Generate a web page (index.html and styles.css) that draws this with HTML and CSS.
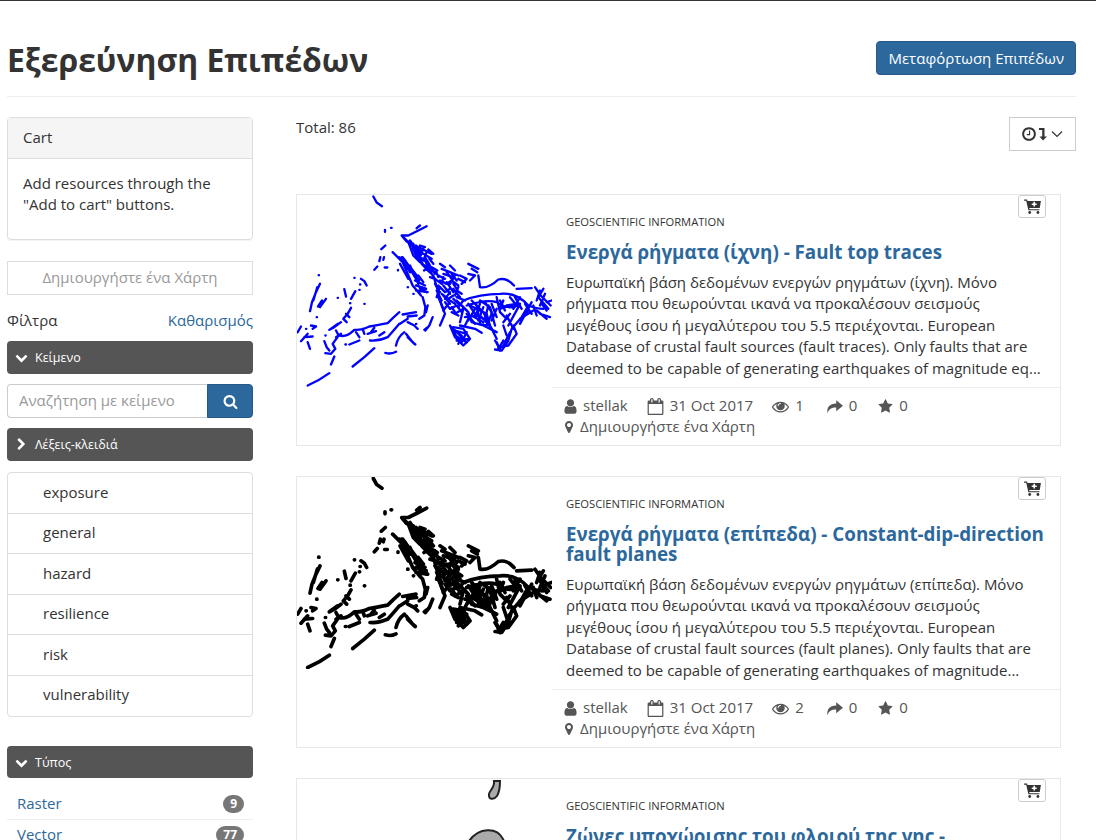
FILE: index.html
```html
<!DOCTYPE html>
<html lang="el">
<head>
  <meta charset="UTF-8" />
  <title>Εξερεύνηση Επιπέδων</title>
  <link rel="stylesheet" href="styles.css">
</head>
<body>
  <svg class="sprite" xmlns="http://www.w3.org/2000/svg">
    <symbol id="i-star" viewBox="0 0 1792 1792"><path d="M1728 647q0 22-26 48l-363 354 86 500q1 7 1 20 0 21-10.500 35.500t-30.500 14.500q-19 0-40-12l-449-236-449 236q-22 12-40 12-21 0-31.500-14.500t-10.500-35.500q0-6 2-20l86-500-364-354q-25-27-25-48 0-37 56-46l502-73 225-455q19-41 49-41t49 41l225 455 502 73q56 9 56 46z"/></symbol>
    <symbol id="i-search" viewBox="0 0 1792 1792"><path d="M1216 832q0-185-131.500-316.500t-316.500-131.500-316.500 131.500-131.500 316.500 131.500 316.500 316.500 131.500 316.500-131.500 131.500-316.500zm512 832q0 52-38 90t-90 38q-54 0-90-38l-343-342q-179 124-399 124-143 0-273.500-55.500t-225-150-150-225-55.500-273.500 55.500-273.500 150-225 225-150 273.500-55.500 273.500 55.500 225 150 150 225 55.500 273.500q0 220-124 399l343 343q37 37 37 90z"/></symbol>
    <symbol id="i-down" viewBox="0 0 1792 1792"><path d="M1683 808l-742 741q-19 19-45 19t-45-19l-742-741q-19-19-19-45.500t19-45.500l166-165q19-19 45-19t45 19l531 531 531-531q19-19 45-19t45 19l166 165q19 19 19 45.500t-19 45.500z"/></symbol>
    <symbol id="i-right" viewBox="0 0 1792 1792"><path d="M1363 877l-742 742q-19 19-45 19t-45-19l-166-166q-19-19-19-45t19-45l531-531-531-531q-19-19-19-45t19-45l166-166q19-19 45-19t45 19l742 742q19 19 19 45t-19 45z"/></symbol>
    <symbol id="i-user" viewBox="0 0 1792 1792"><path d="M1536 1399q0 109-62.500 187t-150.500 78h-854q-88 0-150.500-78t-62.500-187q0-85 8.500-160.500t31.500-152 58.500-131 94-89 134.500-34.500q131 128 313 128t313-128q76 0 134.500 34.500t94 89 58.500 131 31.500 152 8.500 160.500zm-256-887q0 159-112.500 271.500t-271.500 112.500-271.500-112.500-112.500-271.500 112.500-271.500 271.500-112.500 271.500 112.500 112.500 271.500z"/></symbol>
    <symbol id="i-marker" viewBox="0 0 1792 1792"><path d="M1152 640q0-106-75-181t-181-75-181 75-75 181 75 181 181 75 181-75 75-181zm256 0q0 109-33 179l-364 774q-16 33-47.500 52t-67.500 19-67.500-19-46.500-52l-365-774q-33-70-33-179 0-212 150-362t362-150 362 150 150 362z"/></symbol>
    <symbol id="i-share" viewBox="0 0 20 20"><path d="M12 2.500 20 9l-8 6.500V11.300C7 11.200 3.300 12.800 1.800 18 .6 11.500 4 6.900 12 6.600z"/></symbol>
    <symbol id="i-eye" viewBox="0 0 1792 1792"><path d="M1664 960q-152-236-381-353 61 104 61 225 0 185-131.500 316.500t-316.500 131.500-316.500-131.500-131.500-316.500q0-121 61-225-229 117-381 353 133 205 333.500 326.500t434.500 121.500 434.500-121.500 333.500-326.500zm-720-384q0-20-14-34t-34-14q-125 0-214.500 89.500t-89.500 214.500q0 20 14 34t34 14 34-14 14-34q0-86 61-147t147-61q20 0 34-14t14-34zm848 384q0 34-20 69-140 230-376.500 368.500t-499.500 138.500-499.500-139-376.500-368q-20-35-20-69t20-69q140-229 376.500-368t499.500-139 499.500 139 376.500 368q20 35 20 69z"/></symbol>
    <symbol id="i-calendar" viewBox="0 0 1792 1792"><path d="M192 1664h1408v-1024h-1408v1024zm384-1216v-288q0-14-9-23t-23-9h-64q-14 0-23 9t-9 23v288q0 14 9 23t23 9h64q14 0 23-9t9-23zm768 0v-288q0-14-9-23t-23-9h-64q-14 0-23 9t-9 23v288q0 14 9 23t23 9h64q14 0 23-9t9-23zm384-64v1280q0 52-38 90t-90 38h-1408q-52 0-90-38t-38-90v-1280q0-52 38-90t90-38h128v-96q0-66 47-113t113-47h64q66 0 113 47t47 113v96h384v-96q0-66 47-113t113-47h64q66 0 113 47t47 113v96h128q52 0 90 38t38 90z"/></symbol>
    <symbol id="i-clock" viewBox="0 0 1536 1792"><path d="M896 544v448q0 14-9 23t-23 9h-320q-14 0-23-9t-9-23v-64q0-14 9-23t23-9h224v-352q0-14 9-23t23-9h64q14 0 23 9t9 23zm416 352q0-148-73-273t-198-198-273-73-273 73-198 198-73 273 73 273 198 198 273 73 273-73 198-198 73-273zm224 0q0 209-103 385.500t-279.500 279.500-385.500 103-385.500-103-279.500-279.500-103-385.500 103-385.500 279.500-279.500 385.500-103 385.500 103 279.500 279.500 103 385.500z"/></symbol>
    <symbol id="i-sort" viewBox="0 0 10 14"><path d="M1 1h5.500v8.500H9L5 13.500 1.500 9.500h2.700V3H1z"/></symbol>
    <symbol id="i-cart" viewBox="0 0 18 16"><path d="M0 .5h3.200l.5 1.600H18l-1.300 7.400H5.500l.3 1.300h10.600v1.300H4.600L2.300 1.800H0z"/><circle cx="6" cy="14.400" r="1.500"/><circle cx="14.800" cy="14.400" r="1.500"/><path fill="#fff" d="M10 3h1.700v1.800h1.800v1.500h-1.800v1.800H10V6.300H8.200V4.800H10z"/></symbol>
    <symbol id="faults" viewBox="3 15 765 573">
      <g fill="none" stroke="currentColor" stroke-linecap="round" stroke-linejoin="round">
        <!-- west side and the small dots above it -->
        <path d="M232 18 242 36 258 47M267 118v6M285 112h2M268 165 256 176M253 200 250 212M264 200 262 208M244 228 235 238M266 231H274M306 238v2
        M68 254h1M72 280 60 305 48 335 42 362M64 290 52 330M90 325 72 350M78 330 66 348M175 262h1M195 265 205 272 212 285M192 282h1M190 298h1M145 296 150 318M178 302 165 325M125 322h1M205 340h1M162 338h1M165 352 155 370 142 385 152 395M150 370 160 380M62 380h1M15 408 5 425M30 415h1M45 405 60 408 50 415M35 430 15 452M25 440 50 438M35 455 42 475M135 395 115 410 100 418M88 435h1M120 420 128 435 110 460 118 475 105 490 88 488M85 452 92 470 100 480M100 418 125 400M120 440 135 430M180 425 190 440M200 415 205 430M225 425 235 412M312 400 335 385
        M130 435Q150 442 175 418 195 420 220 408 240 405 275 398 295 378 310 365M115 498 105 522M235 473 205 500 170 528M100 548Q70 570 35 585M148 462h2M160 462 190 450M222 450Q250 452 275 440 295 418 310 400M215 430 240 422M250 435 265 425M320 372 360 365M335 378 362 375M300 465Q305 440 325 425M330 430 350 455 358 462M335 440 355 460M335 395 355 405 365 415M360 400h1M268 487Q285 492 300 484
        M380 320 388 350 385 375 370 385M395 345 390 365M410 380 400 405 388 420M385 418 392 412M352 310h1M335 290h1M290 185 320 215 335 250 350 285 375 315M300 195 345 240M320 200 370 270M310 200 335 235M360 285 390 295M360 300 395 305"/>
        <!-- dense eastern part -->
        <path transform="translate(312 105)" d="M80 2 55 15 25 30 5 30 20 48 45 62 58 100 78 130 100 150 112 190 125 240 135 265 120 300M60 0 50 8M25 50 40 90 60 110M30 55 55 65 75 75 95 85M40 65 50 95 70 120 85 125M45 70 60 80 55 100 75 105 90 135 105 140M40 70 50 85 58 80M65 115 80 130 72 135M95 145 105 160 90 155M60 60 75 65M85 72 100 85M70 85 95 100
        M120 115 135 125M125 130 150 140 175 150M130 145 160 155M150 120 165 135M205 115 235 130M215 130 232 140M205 145 225 150 210 165M180 150 200 160 185 175M120 165 140 175 155 165 175 180M115 180 135 200 150 190M125 205 145 220 160 210M110 195 125 225M150 225 165 235M170 195 185 205M160 175 170 190M135 230 150 250 170 240 185 260M155 260 175 270
        M235 150 240 185Q265 190 295 162 320 155 342 180M350 190 395 188M405 185 422 210 452 240M420 195 410 225M435 205 420 240M440 230 455 225M190 225Q240 205 300 205 350 200 385 240 410 250 430 250M200 240Q260 220 290 230 330 258 360 235M170 225 205 260 215 290 250 300 290 320M210 240 260 265 270 300M240 225 270 245 285 300M195 275 230 270 260 285M230 240 240 290M290 215 300 260 320 280M320 240 350 235M300 250 330 240M385 240 365 275 335 310 325 345 305 375 285 372M340 300 350 325 325 360 295 365M360 280 400 255M395 230 360 295M410 255 440 280M420 265 450 275M285 345 300 370M250 260 290 340
        M150 300 165 335 190 360 210 340 190 310 160 305M165 315 200 325M170 345 205 340M180 300 225 310 245 322M190 250 180 290M205 280 195 300"/>
        <path transform="translate(312 105)" d="M10 35 30 55M18 45 40 55M30 45 50 75M35 58 48 90M48 60 68 85M55 72 62 100M70 68 62 90M80 80 70 105M60 95 85 110M75 95 90 120M88 100 100 115M70 118 95 130M85 115 105 145M95 125 112 135M105 130 115 155M5 95 30 140M15 105 45 155M0 115 25 160M30 120 55 175M35 130 50 150M55 150 70 170M45 165 75 180M50 180 78 190M60 190 80 200
        M105 160 125 175M115 150 135 160M130 155 125 175M140 140 155 160M155 145 170 165M165 150 150 175M175 160 195 170M105 175 120 200M120 185 110 215M130 180 150 205M140 170 160 200M150 200 135 220M160 190 180 215M175 185 165 210M115 215 130 250M130 210 150 235M145 235 130 255M160 220 180 240M170 215 195 225M155 245 165 260M175 245 190 225M185 240 200 255M165 265 190 250
        M205 235 225 265M215 225 245 255M225 250 205 285M240 235 225 275M250 245 235 285M255 230 275 260M265 240 255 280M275 235 290 275M200 265 225 295M215 270 250 290M240 270 265 295M255 285 275 310M235 295 260 300M275 265 260 300M290 250 275 285M300 225 315 255M310 225 300 250M330 215 350 240M345 215 365 250M360 215 340 250M375 235 395 265M385 255 365 280M400 240 410 270M425 235 440 255M415 215 445 250M430 190 415 215M330 265 310 290M355 245 325 300M320 270 340 310M310 300 320 330
        M160 315 175 345M175 320 195 345M165 330 200 350M185 330 175 355M200 320 185 350M155 305 180 330M290 350 300 375M310 345 295 370M330 320 310 360"/>
      </g>
    </symbol>
  </svg>

  <div class="page">
    <header class="page-head">
      <h1>Εξερεύνηση Επιπέδων</h1>
      <a class="btn-primary" href="#">Μεταφόρτωση Επιπέδων</a>
    </header>

    <div class="columns">
      <aside class="sidebar">
        <section class="cart">
          <div class="cart-head">Cart</div>
          <div class="cart-body">Add resources through the "Add to cart" buttons.</div>
        </section>

        <a class="btn-map" href="#">Δημιουργήστε ένα Χάρτη</a>

        <div class="filter-row">
          <span>Φίλτρα</span>
          <a href="#">Καθαρισμός</a>
        </div>

        <div class="bar"><svg class="bar-icon"><use href="#i-down"/></svg>Κείμενο</div>
        <form class="search">
          <input type="text" placeholder="Αναζήτηση με κείμενο" />
          <button type="button"><svg><use href="#i-search"/></svg></button>
        </form>

        <div class="bar"><svg class="bar-icon"><use href="#i-right"/></svg>Λέξεις-κλειδιά</div>
        <ul class="keywords">
          <li>exposure</li>
          <li>general</li>
          <li>hazard</li>
          <li>resilience</li>
          <li>risk</li>
          <li>vulnerability</li>
        </ul>

        <div class="bar bar-type"><svg class="bar-icon"><use href="#i-down"/></svg>Τύπος</div>
        <ul class="types">
          <li><a href="#">Raster</a><span class="badge">9</span></li>
          <li><a href="#">Vector</a><span class="badge">77</span></li>
        </ul>
      </aside>

      <main class="results">
        <div class="results-top">
          <span class="total">Total: 86</span>
          <button class="sort" type="button">
            <svg class="sort-clock"><use href="#i-clock"/></svg>
            <svg class="sort-arrow"><use href="#i-sort"/></svg>
            <svg class="sort-caret" viewBox="0 0 12 8"><path d="M1 1.500 6 6.500 11 1.500"/></svg>
          </button>
        </div>

        <article class="card">
          <svg class="thumb thumb-blue"><use href="#faults"/></svg>
          <div class="card-text">
            <button class="add-cart" type="button"><svg><use href="#i-cart"/></svg></button>
            <div class="category">Geoscientific Information</div>
            <h2><a href="#">Ενεργά ρήγματα (ίχνη) - Fault top traces</a></h2>
            <p>Ευρωπαϊκή βάση δεδομένων ενεργών ρηγμάτων (ίχνη). Μόνο ρήγματα που θεωρούνται ικανά να προκαλέσουν σεισμούς μεγέθους ίσου ή μεγαλύτερου του 5.5 περιέχονται. European Database of crustal fault sources (fault traces). Only faults that are deemed to be capable of generating earthquakes of magnitude eq...</p>
            <div class="meta">
              <div class="meta-line">
                <span class="m-user"><svg><use href="#i-user"/></svg>stellak</span>
                <span class="m-date"><svg><use href="#i-calendar"/></svg>31 Oct 2017</span>
                <span class="m-views"><svg><use href="#i-eye"/></svg>1</span>
                <span class="m-share"><svg><use href="#i-share"/></svg>0</span>
                <span class="m-star"><svg><use href="#i-star"/></svg>0</span>
              </div>
              <div class="meta-line"><span class="m-map"><svg><use href="#i-marker"/></svg>Δημιουργήστε ένα Χάρτη</span></div>
            </div>
          </div>
        </article>

        <article class="card">
          <svg class="thumb thumb-black"><use href="#faults"/></svg>
          <div class="card-text">
            <button class="add-cart" type="button"><svg><use href="#i-cart"/></svg></button>
            <div class="category">Geoscientific Information</div>
            <h2><a href="#">Ενεργά ρήγματα (επίπεδα) - Constant-dip-direction fault planes</a></h2>
            <p>Ευρωπαϊκή βάση δεδομένων ενεργών ρηγμάτων (επίπεδα). Μόνο ρήγματα που θεωρούνται ικανά να προκαλέσουν σεισμούς μεγέθους ίσου ή μεγαλύτερου του 5.5 περιέχονται. European Database of crustal fault sources (fault planes). Only faults that are deemed to be capable of generating earthquakes of magnitude...</p>
            <div class="meta">
              <div class="meta-line">
                <span class="m-user"><svg><use href="#i-user"/></svg>stellak</span>
                <span class="m-date"><svg><use href="#i-calendar"/></svg>31 Oct 2017</span>
                <span class="m-views"><svg><use href="#i-eye"/></svg>2</span>
                <span class="m-share"><svg><use href="#i-share"/></svg>0</span>
                <span class="m-star"><svg><use href="#i-star"/></svg>0</span>
              </div>
              <div class="meta-line"><span class="m-map"><svg><use href="#i-marker"/></svg>Δημιουργήστε ένα Χάρτη</span></div>
            </div>
          </div>
        </article>

        <article class="card">
          <svg class="thumb thumb-zones" viewBox="0 0 255 192">
            <path d="M197 2C198 8 193 11 192 15 191 21 197 21 200 17 203 12 203 6 203 2Z"/>
            <path d="M172 62C182 48 200 48 206 60 212 70 212 90 198 120 182 125 166 95 172 62Z"/>
          </svg>
          <div class="card-text">
            <button class="add-cart" type="button"><svg><use href="#i-cart"/></svg></button>
            <div class="category">Geoscientific Information</div>
            <h2><a href="#">Ζώνες υποχώρισης του φλοιού της γης - Crustal&nbsp;subduction&nbsp;zones</a></h2>
          </div>
        </article>
      </main>
    </div>
  </div>
</body>
</html>
```
FILE: styles.css
```css
* {
  box-sizing: border-box;
}
body {
  margin: 0;
  border-top: 1px solid #333;
  font-family: "Open Sans", sans-serif;
  font-size: 15px;
  line-height: 1.42857;
  color: #333;
  background: #fff;
}
a {
  color: #2c689c;
  text-decoration: none;
}
.sprite {
  position: absolute;
  width: 0;
  height: 0;
}
.page {
  padding: 0 20px 0 7px;
}
.page-head {
  display: flex;
  justify-content: space-between;
  align-items: center;
  height: 96px;
  padding-top: 23px;
  border-bottom: 1px solid #eee;
}
.page-head h1 {
  margin: 0;
  font-size: 31.900px;
  font-weight: 700;
  line-height: 1.1;
  color: #333;
}
.btn-primary {
  display: block;
  height: 34px;
  margin-bottom: 4px;
  padding: 6px 11px;
  line-height: 20px;
  color: #fff;
  background: #2c689c;
  border: 1px solid #255a88;
  border-radius: 4px;
}
.columns {
  display: grid;
  grid-template-columns: 246px 765px;
  column-gap: 43px;
  padding-top: 20px;
}

/* sidebar */
.cart {
  border: 1px solid #ddd;
  border-radius: 4px;
  box-shadow: 0 1px 1px rgba(0, 0, 0, .05);
  height: 123px;
}
.cart-head {
  height: 41px;
  padding: 9px 15px;
  background: #f5f5f5;
  border-bottom: 1px solid #ddd;
}
.cart-body {
  padding: 14px 15px;
}
.btn-map {
  display: block;
  margin-top: 21px;
  height: 34px;
  line-height: 31px;
  text-align: center;
  color: #999;
  border: 1px solid #ddd;
}
.filter-row {
  display: flex;
  justify-content: space-between;
  margin-top: 15px;
  padding-bottom: 1px;
  height: 31px;
}
.bar {
  display: flex;
  align-items: center;
  height: 33px;
  padding-left: 8px;
  font-size: 12.500px;
  color: #fff;
  background: #555;
  border-radius: 4px;
}
.bar-icon {
  width: 13px;
  height: 13px;
  margin-right: 7px;
  fill: #fff;
}
.search {
  display: flex;
  height: 34px;
  margin: 10px 0;
}
.search input {
  flex: 1;
  min-width: 0;
  padding: 6px 11px;
  font: inherit;
  border: 1px solid #ccc;
  border-right: 0;
  border-radius: 4px 0 0 4px;
}
.search input::placeholder {
  color: #999;
}
.search button {
  width: 46px;
  padding: 0;
  background: #2c689c;
  border: 1px solid #255a88;
  border-radius: 0 4px 4px 0;
}
.search svg {
  display: block;
  width: 15px;
  height: 15px;
  margin: auto;
  fill: #fff;
}
.keywords {
  margin: 11px 0 0;
  padding: 0;
  list-style: none;
  border: 1px solid #ddd;
  border-radius: 4px;
}
.keywords li {
  height: 40.500px;
  padding: 8.500px 35px;
  border-bottom: 1px solid #ddd;
}
.keywords li:last-child {
  border-bottom: 0;
}
.bar-type {
  margin-top: 29px;
  height: 32px;
  padding-top: 1px;
}
.types {
  margin: 11px 0 0;
  padding: 0;
  list-style: none;
}
.types li {
  display: flex;
  justify-content: space-between;
  align-items: center;
  height: 31px;
  padding: 0 9px 0 10px;
  border-bottom: 1px solid #eee;
}
.badge {
  min-width: 10px;
  padding: 3px 7px;
  font-size: 12px;
  font-weight: 700;
  line-height: 1;
  color: #fff;
  background: #777;
  border-radius: 10px;
}

/* results */
.results {
  min-width: 0;
}
.results-top {
  display: flex;
  justify-content: space-between;
  align-items: flex-start;
  width: 780px;
  height: 77px;
}
.sort {
  display: flex;
  align-items: center;
  justify-content: center;
  width: 67px;
  height: 34px;
  padding: 0;
  background: #fff;
  border: 1px solid #ccc;
}
.sort-clock {
  width: 14px;
  height: 16px;
  margin-right: 1px;
  fill: #333;
}
.sort-arrow {
  width: 10px;
  height: 14px;
  margin: 0 3px 0 1px;
  fill: #333;
}
.sort-caret {
  width: 12px;
  height: 8px;
  fill: none;
  stroke: #333;
  stroke-width: 1.200;
}
.card {
  display: flex;
  height: 252px;
  margin-bottom: 30px;
  background: #fff;
  border: 1px solid #e7e7e7;
}
.card + .card {
  height: 272px;
}
.thumb {
  flex: none;
  width: 255px;
  height: 192px;
  filter: blur(.35px);
}
.thumb-blue {
  color: #0000ff;
  stroke-width: 7;
}
.thumb-black {
  color: #000;
  stroke-width: 11;
}
.thumb-zones path {
  fill: #aaa;
  stroke: #222;
  stroke-width: 2;
}
.card-text {
  position: relative;
  flex: 1;
  min-width: 0;
  padding-top: 19px;
}
.add-cart {
  position: absolute;
  top: 0;
  right: 14px;
  width: 28px;
  height: 23px;
  padding: 0;
  background: #fff;
  border: 1px solid #ccc;
  border-radius: 3px;
}
.add-cart svg {
  display: block;
  width: 17px;
  height: 15px;
  margin: auto;
  fill: #333;
}
.category {
  padding-left: 14px;
  font-size: 11.200px;
  line-height: 16px;
  text-transform: uppercase;
}
.card-text h2 {
  margin: 12px 0 0;
  padding: 0 14px;
  font-size: 18.800px;
  font-weight: 700;
  line-height: 20px;
}
.card-text p {
  margin: 10px 0 0;
  padding: 0 14px;
}
.meta {
  margin-top: 8px;
  padding: 7.600px 14px 0 10px;
  border-top: 1px solid #eee;
  color: #555;
}
.meta-line {
  display: flex;
  height: 20.800px;
  align-items: center;
}
.meta-line span {
  display: flex;
  align-items: center;
}
.meta-line svg {
  width: 17px;
  height: 17px;
  margin-right: 6px;
  fill: #555;
}
.m-user svg {
  margin-right: 4px;
}
.m-user {
  margin-right: 19px;
}
.m-date {
  margin-right: 19px;
}
.m-views {
  margin-right: 22px;
}
.m-share {
  margin-right: 21px;
}
.meta-line .m-star svg {
  width: 15px;
  height: 15px;
}
.meta-line .m-map svg {
  width: 14px;
  height: 14px;
  margin-right: 4px;
}
```
